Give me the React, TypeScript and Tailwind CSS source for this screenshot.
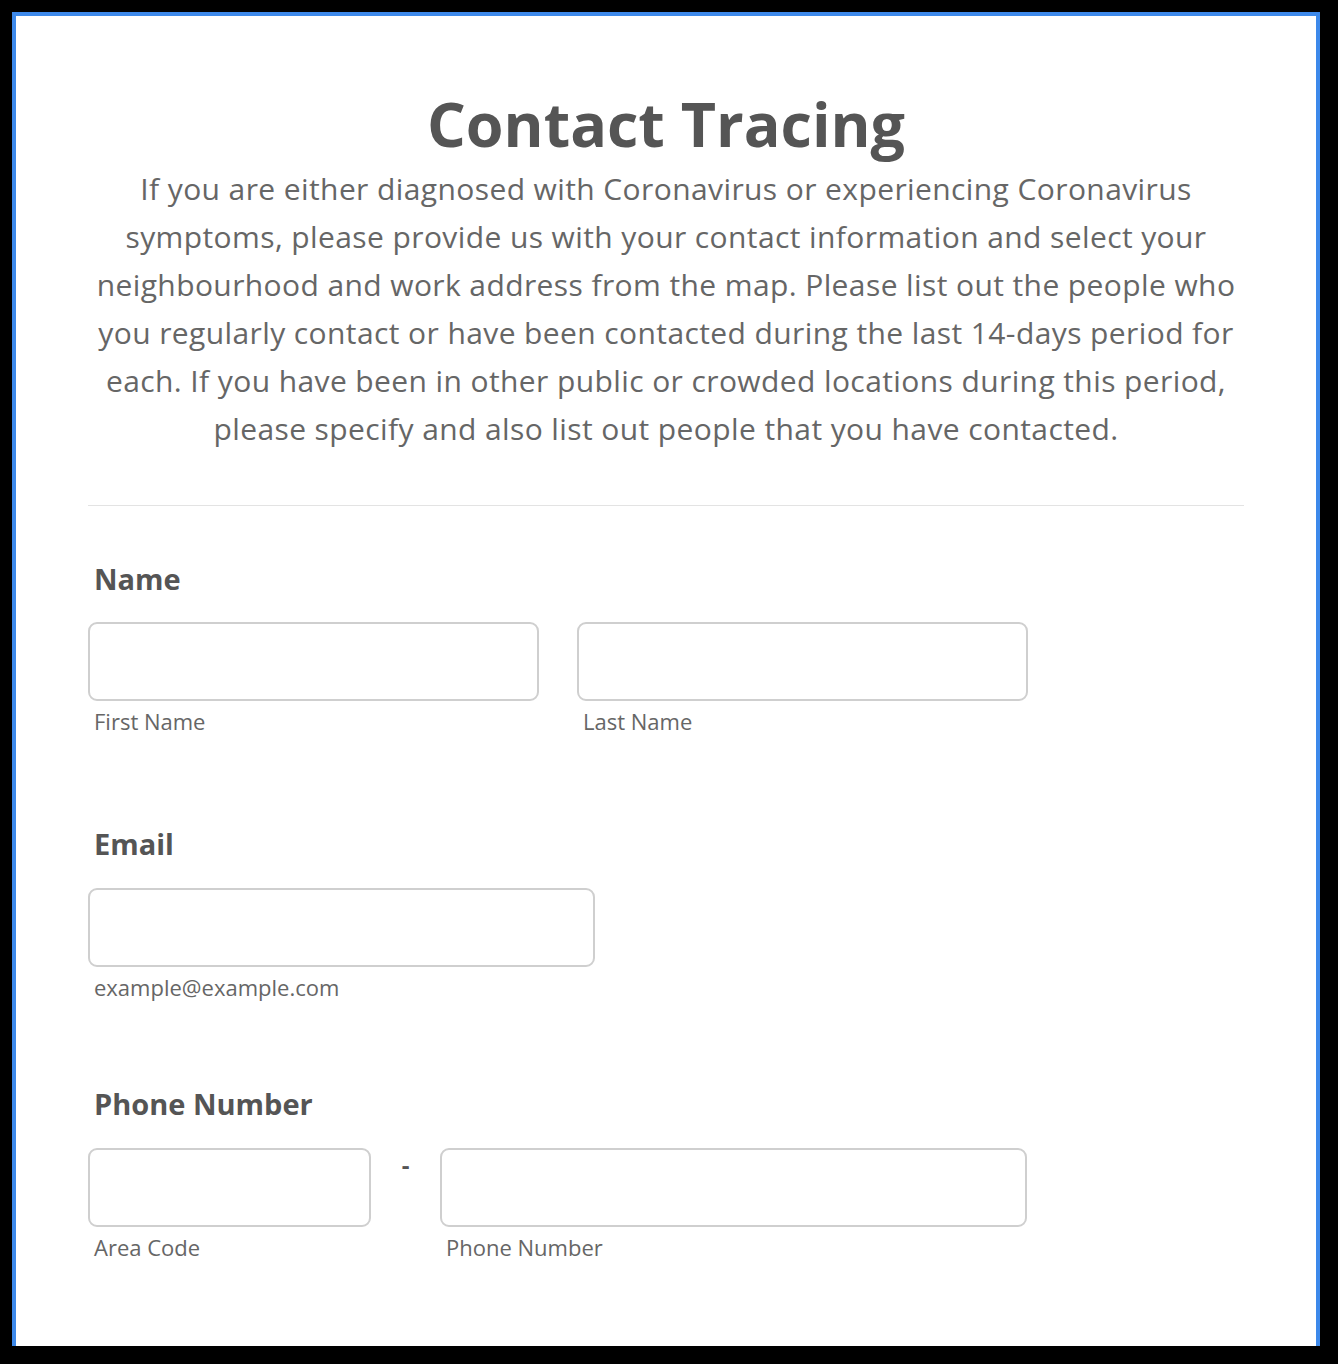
import React from "react";

const font = { fontFamily: '"Open Sans", "DejaVu Sans", sans-serif' };

function Input({ w }: { w: string }) {
  return <div className={`${w} h-[79px] rounded-[9px] border-2 border-[#cfcfcf] bg-white`} />;
}

export default function App() {
  const lines = [
    "If you are either diagnosed with Coronavirus or experiencing Coronavirus",
    "symptoms, please provide us with your contact information and select your",
    "neighbourhood and work address from the map. Please list out the people who",
    "you regularly contact or have been contacted during the last 14-days period for",
    "each. If you have been in other public or crowded locations during this period,",
    "please specify and also list out people that you have contacted.",
  ];
  return (
    <div className="w-[1338px] h-[1364px] bg-black pt-[12px] pl-[12px] pr-[18px] pb-[18px]" style={font}>
      <div className="w-[1308px] h-[1334px] border-t-4 border-l-4 border-r-4 border-[#3d89ea] bg-white">
        <div className="pt-[76px] text-center text-[#555555]">
          <h1 className="text-[61px] leading-[64px] font-bold">Contact Tracing</h1>
          <p className="mt-[9px] text-[30px] leading-[48px] tracking-[0.4px] text-[#666666]">
            {lines.map((l, i) => (
              <span key={i} className="block whitespace-nowrap">{l}</span>
            ))}
          </p>
        </div>
        <div className="mx-[72px] mt-[52px] h-px bg-[#e3e3e3]" />
        <div className="pl-[72px] text-[#555555]">
          <div className="mt-[53px] pl-[6px] text-[29px] font-bold leading-[40px]">Name</div>
          <div className="mt-[23px] flex gap-[38px]">
            <div>
              <Input w="w-[451px]" />
              <div className="mt-[5px] pl-[6px] text-[22px] leading-[30px] text-[#666666]">First Name</div>
            </div>
            <div>
              <Input w="w-[451px]" />
              <div className="mt-[5px] pl-[6px] text-[22px] leading-[30px] text-[#666666]">Last Name</div>
            </div>
          </div>
          <div className="mt-[88px] pl-[6px] text-[29px] font-bold leading-[40px]">Email</div>
          <div className="mt-[24px]">
            <Input w="w-[507px]" />
            <div className="mt-[5px] pl-[6px] text-[22px] leading-[30px] text-[#666666]">example@example.com</div>
          </div>
          <div className="mt-[82px] pl-[6px] text-[29px] font-bold leading-[40px]">Phone Number</div>
          <div className="mt-[24px] flex">
            <div>
              <Input w="w-[283px]" />
              <div className="mt-[5px] pl-[6px] text-[22px] leading-[30px] text-[#666666]">Area Code</div>
            </div>
            <div className="w-[69px] pt-[2px] text-center text-[24px] font-bold leading-[30px]">-</div>
            <div>
              <Input w="w-[587px]" />
              <div className="mt-[5px] pl-[6px] text-[22px] leading-[30px] text-[#666666]">Phone Number</div>
            </div>
          </div>
        </div>
      </div>
    </div>
  );
}
